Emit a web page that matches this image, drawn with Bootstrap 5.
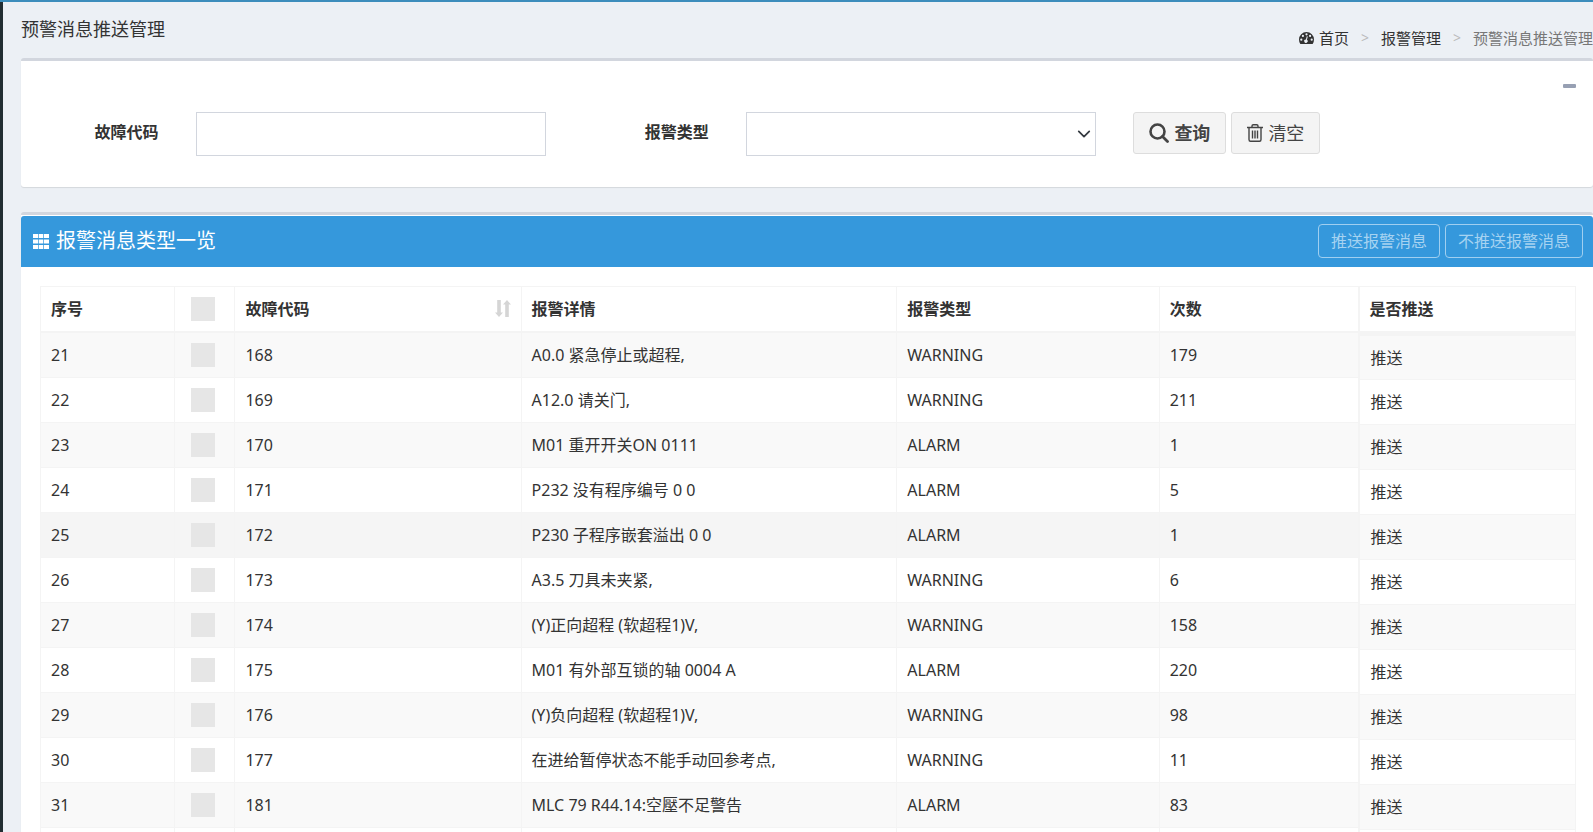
<!DOCTYPE html>
<html lang="zh-CN">
<head>
<meta charset="utf-8">
<meta name="viewport" content="width=device-width, initial-scale=1">
<title>预警消息推送管理</title>
<link rel="stylesheet" href="https://cdn.jsdelivr.net/npm/bootstrap@5.3.0/dist/css/bootstrap.min.css">
<style>
  body { font-family: "Noto Sans", "Noto Sans CJK SC", sans-serif; font-size: 16px; line-height: 24px; color: #333; background: #ecf0f5; }
  .app { border-top: 2px solid #3c8dbc; background: #ecf0f5; }
  .side-edge { flex: 0 0 3px; background: #222d32; }
  .content-area { padding-left: 18px; min-width: 0; }
  .page-head { height: 56px; padding-top: 15px; }
  .page-head h1 { font-size: 18px; line-height: 24px; font-weight: 400; margin: 0; }
  .crumbs { font-size: 15px; line-height: 20px; margin-top: 11px; white-space: nowrap; --bs-breadcrumb-divider: ">"; }
  .crumbs li { display: flex; align-items: center; padding: 0; }
  .crumbs .breadcrumb-item + .breadcrumb-item { padding: 0; }
  .crumbs .breadcrumb-item + .breadcrumb-item::before { color: #bbb; padding: 0 12px; font-size: 14px; }
  .crumbs a { color: #333; text-decoration: none; }
  .crumbs .active { color: #777; }
  .panel { background: #fff; border-top: 3px solid #d2d6de; border-radius: 3px; box-shadow: 0 1px 1px rgba(0,0,0,.1); }
  .search-panel { height: 129px; margin-bottom: 25px; padding-top: 51px; position: relative; }
  .collapse-btn { position: absolute; top: 16px; right: 17px; padding: 7px 0; border: 0; background: none; display: flex; }
  .collapse-btn span { width: 13px; height: 4px; background: #97a0b3; border-radius: 1px; }
  .search-grid { display: grid; grid-template-columns: 35% 35% 1fr; }
  .field label { flex: 0 0 25%; text-align: right; font-weight: 700; line-height: 40px; }
  .field .form-control, .field .form-select { height: 44px; border: 1px solid #d2d6de; border-radius: 0; margin: 0 25px 0 37px; }
  .field .form-select { background-position: right 4px center; background-size: 14px 14px; }
  .tool-btn { height: 42px; padding: 0 15px; gap: 5px; font-size: 18px; color: #444; background: #f4f4f4; border: 1px solid #ddd; border-radius: 3px; }
  .btn-pair { gap: 5px; }
  .list-head { background: #3598dc; color: #fff; height: 51px; margin-top: 1px; padding: 0 10px 2px 12px; border-radius: 3px 3px 0 0; }
  .list-head h2 { font-size: 20px; line-height: 24px; font-weight: 400; margin: 0; gap: 7px; }
  .push-btn { height: 34px; padding: 0 12px; font-size: 16px; line-height: 24px; color: #a6d3f1; border: 1px solid #a0cff0; border-radius: 4px; }
  .list-body { padding: 19px 17px 0 19px; }
  .grid-main { flex: 0 0 85.9%; min-width: 0; }
  .alarm-table { width: 100%; table-layout: fixed; border-collapse: separate; border-spacing: 0; border-top: 1px solid #f4f4f4; border-left: 1px solid #f4f4f4; }
  .alarm-table th, .alarm-table td { height: 45px; padding: 0 10px; border-right: 1px solid #f4f4f4; border-bottom: 1px solid #f4f4f4; vertical-align: middle; white-space: nowrap; }
  .alarm-table th { height: 46px; border-bottom-width: 2px; font-weight: 700; }
  .alarm-table tbody tr:nth-child(odd) { background: #f9f9f9; }
  .alarm-table tbody tr.is-hover { background: #f5f5f5; }
  .alarm-table .pick { padding: 0 0 0 16px; }
  .alarm-table input { appearance: none; display: block; width: 24px; height: 24px; margin: 0; background: #e6e6e6; }
  .push-table th { height: 49px; padding-left: 9px; border-bottom-width: 5px; }
  .push-table tbody tr:first-child td { height: 44px; }
</style>
</head>
<body>
<div class="app d-flex vh-100 overflow-hidden">
  <div class="side-edge"></div>
  <main class="content-area flex-grow-1">
    <header class="page-head d-flex justify-content-between align-items-start">
      <h1>预警消息推送管理</h1>
      <nav aria-label="breadcrumb">
        <ol class="crumbs breadcrumb flex-nowrap mb-0">
          <li class="breadcrumb-item"><svg class="me-1" width="17" height="14" viewBox="0 0 17 14" aria-hidden="true"><path fill="#333" d="M8.500 1A7.500 7.500 0 0 0 1 8.500q0 2.400 1.200 4.300.2.200.5.200h11.600q.3 0 .5-.2Q16 10.900 16 8.500A7.500 7.500 0 0 0 8.500 1z"/><g fill="#ecf0f5"><circle cx="3.300" cy="8.700" r="1.100"/><circle cx="4.900" cy="4.900" r="1.100"/><circle cx="8.500" cy="3.300" r="1.100"/><circle cx="12.100" cy="4.900" r="1.100"/><circle cx="13.700" cy="8.700" r="1.100"/><path d="M9.800 5.500l-.9 3.300a1.700 1.700 0 1 1-1-.3l.9-3.200z"/></g></svg><a href="#">首页</a></li>
          <li class="breadcrumb-item"><a href="#">报警管理</a></li>
          <li class="breadcrumb-item active" aria-current="page">预警消息推送管理</li>
        </ol>
      </nav>
    </header>

    <section class="panel search-panel">
      <button class="collapse-btn" type="button" aria-label="折叠"><span></span></button>
      <form class="search-grid">
        <div class="field d-flex"><label for="code">故障代码</label><input class="form-control" id="code" type="text"></div>
        <div class="field d-flex"><label for="kind">报警类型</label><select class="form-select" id="kind"><option></option></select></div>
        <div class="btn-pair d-flex ps-2 ms-1">
          <button class="tool-btn d-flex align-items-center fw-bold" type="button"><svg width="20" height="20" viewBox="0 0 20 20" aria-hidden="true"><circle cx="8.500" cy="8.500" r="7" fill="none" stroke="#444" stroke-width="2.600"/><path d="M13.500 13.500l5 5" stroke="#444" stroke-width="2.800" stroke-linecap="round"/></svg>查询</button>
          <button class="tool-btn d-flex align-items-center" type="button"><svg width="16" height="20" viewBox="0 0 16 20" fill="none" stroke="#444" stroke-width="1.400" aria-hidden="true"><path d="M0 4.500h16M5 4.500V3q0-1.300 1.300-1.300h3.400Q11 1.700 11 3v1.500M2 4.500v12q0 1.800 1.500 1.800h9q1.500 0 1.500-1.800v-12M5.500 7.500v8M8 7.500v8M10.500 7.500v8"/></svg>清空</button>
        </div>
      </form>
    </section>

    <section class="panel">
      <div class="list-head d-flex align-items-center justify-content-between">
        <h2 class="d-flex align-items-center"><svg width="16" height="16" viewBox="0 0 16 16" fill="#fff" aria-hidden="true"><path d="M0 1h5v4H0zM5.700 1h4.600v4H5.700zM11 1h5v4h-5zM0 6.500h5v4H0zM5.700 6.500h4.600v4H5.700zM11 6.500h5v4h-5zM0 12h5v4H0zM5.700 12h4.600v4H5.700zM11 12h5v4h-5z"/></svg>报警消息类型一览</h2>
        <div class="btn-pair d-flex">
          <button class="push-btn bg-transparent" type="button">推送报警消息</button>
          <button class="push-btn bg-transparent" type="button">不推送报警消息</button>
        </div>
      </div>
      <div class="list-body d-flex align-items-start">
        <div class="grid-main">
        <table class="alarm-table">
          <colgroup><col style="width:10.2%"><col style="width:4.55%"><col style="width:21.7%"><col style="width:28.5%"><col style="width:19.9%"><col></colgroup>
          <thead><tr><th>序号</th><th class="pick"><input type="checkbox" aria-label="全选"></th><th><div class="d-flex align-items-center justify-content-between">故障代码<svg width="16" height="18" viewBox="0 0 16 18" fill="#d5d5d5" aria-hidden="true"><path d="M2.200 0h3.600v12.500H8l-4 4.500-4-4.500h2.200zM10.200 17V4.500H8L12 0l4 4.500h-2.200V17z"/></svg></div></th><th>报警详情</th><th>报警类型</th><th>次数</th></tr></thead>
          <tbody>
            <tr><td>21</td><td class="pick"><input type="checkbox" aria-label="选择 21"></td><td>168</td><td>A0.0 紧急停止或超程,</td><td>WARNING</td><td>179</td></tr>
            <tr><td>22</td><td class="pick"><input type="checkbox" aria-label="选择 22"></td><td>169</td><td>A12.0 请关门,</td><td>WARNING</td><td>211</td></tr>
            <tr><td>23</td><td class="pick"><input type="checkbox" aria-label="选择 23"></td><td>170</td><td>M01 重开开关ON 0111</td><td>ALARM</td><td>1</td></tr>
            <tr><td>24</td><td class="pick"><input type="checkbox" aria-label="选择 24"></td><td>171</td><td>P232 没有程序编号 0 0</td><td>ALARM</td><td>5</td></tr>
            <tr class="is-hover"><td>25</td><td class="pick"><input type="checkbox" aria-label="选择 25"></td><td>172</td><td>P230 子程序嵌套溢出 0 0</td><td>ALARM</td><td>1</td></tr>
            <tr><td>26</td><td class="pick"><input type="checkbox" aria-label="选择 26"></td><td>173</td><td>A3.5 刀具未夹紧,</td><td>WARNING</td><td>6</td></tr>
            <tr><td>27</td><td class="pick"><input type="checkbox" aria-label="选择 27"></td><td>174</td><td>(Y)正向超程 (软超程1)V,</td><td>WARNING</td><td>158</td></tr>
            <tr><td>28</td><td class="pick"><input type="checkbox" aria-label="选择 28"></td><td>175</td><td>M01 有外部互锁的轴 0004 A</td><td>ALARM</td><td>220</td></tr>
            <tr><td>29</td><td class="pick"><input type="checkbox" aria-label="选择 29"></td><td>176</td><td>(Y)负向超程 (软超程1)V,</td><td>WARNING</td><td>98</td></tr>
            <tr><td>30</td><td class="pick"><input type="checkbox" aria-label="选择 30"></td><td>177</td><td>在进给暂停状态不能手动回参考点,</td><td>WARNING</td><td>11</td></tr>
            <tr><td>31</td><td class="pick"><input type="checkbox" aria-label="选择 31"></td><td>181</td><td>MLC 79 R44.14:空壓不足警告</td><td>ALARM</td><td>83</td></tr>
            <tr><td></td><td></td><td></td><td></td><td></td><td></td></tr>
          </tbody>
        </table>
        </div>
        <table class="alarm-table push-table">
          <thead><tr><th>是否推送</th></tr></thead>
          <tbody>
            <tr><td>推送</td></tr><tr><td>推送</td></tr><tr><td>推送</td></tr><tr><td>推送</td></tr><tr><td>推送</td></tr><tr><td>推送</td></tr><tr><td>推送</td></tr><tr><td>推送</td></tr><tr><td>推送</td></tr><tr><td>推送</td></tr><tr><td>推送</td></tr><tr><td></td></tr>
          </tbody>
        </table>
      </div>
    </section>
  </main>
</div>
<script src="https://cdn.jsdelivr.net/npm/bootstrap@5.3.0/dist/js/bootstrap.bundle.min.js"></script>
</body>
</html>
